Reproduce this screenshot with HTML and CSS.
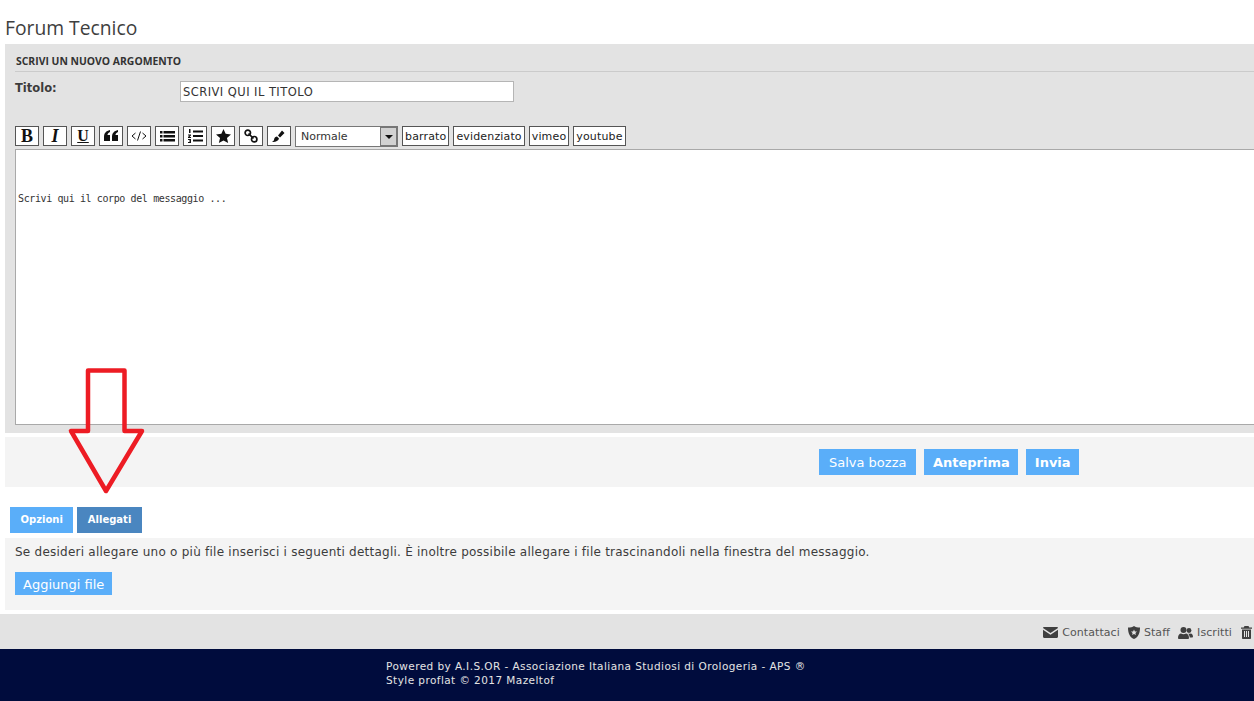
FILE: index.html
```html
<!DOCTYPE html>
<html lang="en">
<head>
    <meta charset="UTF-8">
    <meta name="viewport" content="width=device-width, initial-scale=1.0">
    <title>Forum Tecnico</title>
    <link rel="stylesheet" href="styles.css">
</head>
<body>
    <h1 class="page-title">Forum Tecnico</h1>

    <div class="post-panel">
        <h2 class="post-heading">SCRIVI UN NUOVO ARGOMENTO</h2>
        <div class="title-row">
            <label class="title-label">Titolo:</label>
            <input type="text" class="title-input" value="SCRIVI QUI IL TITOLO">
        </div>
        <div class="toolbar">
            <button class="tool tool-b">B</button>
            <button class="tool tool-i">I</button>
            <button class="tool tool-u">U</button>
            <button class="tool">
                <svg width="14" height="12" viewBox="0 0 14 12"><path d="M0 7C0 3 2 1 6 0v2C4 3 3.500 4 3.500 5H6v6H0zM8 7c0-4 2-6 6-7v2c-2 1-2.500 2-2.500 3H14v6H8z"/></svg>
            </button>
            <button class="tool">
                <svg class="line-icon" width="16" height="12" viewBox="0 0 16 12" stroke-width="1"><path d="M4.500 3 1 6l3.500 3M11.500 3 15 6l-3.500 3M9.500 1.500 6.500 10.500"/></svg>
            </button>
            <button class="tool">
                <svg width="15" height="11" viewBox="0 0 15 11"><path d="M0 0h2.500v2.500H0zM3.500 0H15v2.500H3.500zM0 4h2.500v2.500H0zM3.500 4H15v2.500H3.500zM0 8h2.500v2.500H0zM3.500 8H15v2.500H3.500z"/></svg>
            </button>
            <button class="tool">
                <svg width="15" height="14" viewBox="0 0 15 14"><path d="M5 1.500h10v2H5zM5 6h10v2H5zM5 10.500h10v2H5zM1 0h1.500v4H1zM0 5.500h3v1L1.500 8H3v1H0V8l1.500-1.500H0zM0 10h3v4H0v-1h2v-.5H1v-1h1V11H0z"/></svg>
            </button>
            <button class="tool">
                <svg width="15" height="14" viewBox="0 0 16 15"><path d="M8 0l2.300 5.200 5.700.6-4.300 3.800 1.300 5.400L8 12.200 3 15l1.300-5.400L0 5.800l5.700-.6z"/></svg>
            </button>
            <button class="tool">
                <svg class="line-icon" width="14" height="14" viewBox="0 0 14 14" stroke-width="1.700"><circle cx="3.800" cy="3.800" r="2.700"/><circle cx="10.200" cy="10.200" r="2.700"/><path d="M4.500 4.500l5 5"/></svg>
            </button>
            <button class="tool">
                <svg width="14" height="14" viewBox="0 0 14 14"><path d="M10 1.500 12.500 4 8 8.500 6 6.500zM5 7.500 7 9.500C6.500 12 3 13.500 0 13c1.500-1 2-1.500 2.200-3 .2-1.500 1.500-2.500 2.800-2.500z"/></svg>
            </button>
            <div class="format-select">
                <span class="format-value">Normale</span>
                <span class="format-arrow"></span>
            </div>
            <button class="tool-text">barrato</button>
            <button class="tool-text">evidenziato</button>
            <button class="tool-text">vimeo</button>
            <button class="tool-text">youtube</button>
        </div>
        <div class="editor">Scrivi qui il corpo del messaggio ...</div>
    </div>

    <div class="submit-bar">
        <button class="blue-btn">Salva bozza</button>
        <button class="blue-btn blue-btn-bold">Anteprima</button>
        <button class="blue-btn blue-btn-bold">Invia</button>
    </div>

    <div class="tabs">
        <a class="tab">Opzioni</a>
        <a class="tab tab-active">Allegati</a>
    </div>

    <div class="attach-panel">
        <p class="attach-text">Se desideri allegare uno o più file inserisci i seguenti dettagli. È inoltre possibile allegare i file trascinandoli nella finestra del messaggio.</p>
        <button class="add-file">Aggiungi file</button>
    </div>

    <div class="link-bar">
        <a class="bar-link">
            <svg width="15" height="11" viewBox="0 0 15 11"><path d="M1.200 0h12.600c.7 0 1.200.5 1.200 1L7.500 6 0 1c0-.5.5-1 1.200-1zM0 2.800 7.500 7.800 15 2.800v7c0 .7-.5 1.200-1.200 1.200H1.200C.5 11 0 10.500 0 9.800z"/></svg>
            Contattaci
        </a>
        <a class="bar-link">
            <svg width="12" height="13" viewBox="0 0 12 13"><path fill-rule="evenodd" d="M6 0c1.500 1 3.500 1.500 6 1.500 0 5.500-1.500 9.500-6 11.500C1.500 11 0 7 0 1.500 2.500 1.500 4.500 1 6 0zM6 3.500l.9 1.900 2.100.2-1.600 1.400.5 2L6 8l-1.900 1 .5-2L3 5.600l2.100-.2z"/></svg>
            Staff
        </a>
        <a class="bar-link">
            <svg width="15" height="12" viewBox="0 0 15 12"><circle cx="5.500" cy="3" r="3"/><circle cx="11" cy="3.500" r="2.400"/><path d="M0 11c0-3 1.500-4.500 3-4.500 1.500 1 3.500 1 5 0 1.500 0 3 1.500 3 4.500 0 .5-.5 1-1 1H1c-.5 0-1-.5-1-1zM10 6.500c1 .4 2 .4 2.800 0 1.200 0 2.200 1.500 2.200 3.200 0 .5-.4.8-.8.8h-2.400C11.500 8.800 11 7.500 10 6.500z"/></svg>
            Iscritti
        </a>
        <a class="bar-link">
            <svg width="11" height="13" viewBox="0 0 11 13"><path fill-rule="evenodd" d="M3.500 0h4l.8 1.500H11v1.200H0V1.500h2.700zM1 3.500h9V12c0 .6-.4 1-1 1H2c-.6 0-1-.4-1-1zM3 5v6h1V5zM5 5v6h1V5zM7 5v6h1V5z"/></svg>
        </a>
    </div>

    <div class="site-footer">
        <div>Powered by A.I.S.OR - Associazione Italiana Studiosi di Orologeria - APS ®</div>
        <div>Style proflat © 2017 Mazeltof</div>
    </div>

    <!-- annotation drawn on top of the screenshot -->
    <svg class="red-arrow" width="90" height="134" viewBox="0 0 90 134">
        <path d="M26 3.500H62.500V64H80L44 124 9 64H26Z" fill="none" stroke="#ed1c24" stroke-width="4.500" stroke-linejoin="round"/>
    </svg>
</body>
</html>
```

FILE: styles.css
```css
:root {
    --blue: #5aaef9;
    --blue-dark: #4a86c0;
    --grey-panel: #e3e3e3;
    --grey-light: #f4f4f4;
    --text-color: #3c3c3c;
    --navy: #000c3d;
}

html, body {
    height: 701px;
    overflow: hidden;
}
body {
    margin: 0;
    position: relative;
    background: #ffffff;
    font-family: "DejaVu Sans", Verdana, sans-serif;
    color: var(--text-color);
}
.page-title {
    margin: 0;
    height: 44px;
    padding: 16px 0 0 5px;
    box-sizing: border-box;
    font-family: "Open Sans", sans-serif;
    font-size: 19.300px;
    line-height: 23px;
    font-weight: 400;
    color: #3f3f3f;
}
.post-panel {
    margin-left: 5px;
    height: 389px;
    box-sizing: border-box;
    padding: 11px 0 0 10px;
    background: var(--grey-panel);
}
.post-heading {
    margin: 0;
    height: 16px;
    padding-left: 1px;
    border-bottom: 1px solid #cbcbcb;
    font-family: "Open Sans", sans-serif;
    font-size: 10.400px;
    line-height: 13px;
    font-weight: 700;
    color: #333333;
}
.title-row {
    display: flex;
    align-items: flex-start;
    margin-top: 9px;
}
.title-label {
    width: 165px;
    font-size: 11.500px;
    font-weight: bold;
    line-height: 15px;
}
.title-input {
    width: 334px;
    height: 21px;
    box-sizing: border-box;
    padding: 0 2px;
    border: 1px solid #b5b5b5;
    background: #ffffff;
    font-family: "DejaVu Sans", Verdana, sans-serif;
    font-size: 11.500px;
    letter-spacing: .45px;
    color: #333333;
    outline: none;
}
.toolbar {
    display: flex;
    align-items: center;
    gap: 4px;
    margin-top: 24px;
    height: 20px;
}
.tool, .tool-text {
    height: 20px;
    box-sizing: border-box;
    padding: 0;
    border: 1px solid #555555;
    background: #ffffff;
    color: #111111;
    display: flex;
    align-items: center;
    justify-content: center;
    flex: none;
}
.tool {
    width: 24px;
    font-family: "Liberation Serif", serif;
    font-size: 18px;
}
.tool svg {
    fill: #111111;
}
.tool svg.line-icon {
    fill: none;
    stroke: #111111;
}
.tool-b {
    font-weight: bold;
}
.tool-i {
    font-style: italic;
    font-weight: bold;
}
.tool-u {
    text-decoration: underline;
    font-size: 16px;
    font-weight: bold;
}
.tool-text {
    padding: 0 2px;
    font-family: "DejaVu Sans", Verdana, sans-serif;
    font-size: 11px;
    letter-spacing: .15px;
    color: #222222;
}
.format-select {
    width: 103px;
    height: 21px;
    box-sizing: border-box;
    border: 1px solid #777777;
    background: #ffffff;
    display: flex;
    align-items: center;
    justify-content: space-between;
    flex: none;
    font-size: 11px;
    color: #333333;
}
.format-value {
    padding-left: 5px;
}
.format-arrow {
    width: 17px;
    height: 19px;
    box-sizing: border-box;
    border: 1px solid #777777;
    background: #d2d2d2;
    position: relative;
}
.format-arrow::after {
    content: "";
    position: absolute;
    left: 4px;
    top: 7px;
    border-left: 4px solid transparent;
    border-right: 4px solid transparent;
    border-top: 4px solid #111111;
}
.editor {
    margin-top: 3px;
    height: 276px;
    box-sizing: border-box;
    border: 1px solid #a9a9a9;
    border-right: none;
    padding: 42px 0 0 2px;
    background: #ffffff;
    font-family: "DejaVu Sans Mono", monospace;
    font-size: 10px;
    letter-spacing: -.39px;
    line-height: 14px;
    color: #333333;
}
.submit-bar {
    margin: 4px 0 0 5px;
    height: 50px;
    padding-left: 814px;
    background: var(--grey-light);
    display: flex;
    align-items: center;
    gap: 8px;
}
.blue-btn {
    height: 26px;
    padding: 0 10px;
    border: none;
    background: var(--blue);
    color: #ffffff;
    font-family: "DejaVu Sans", Verdana, sans-serif;
    font-size: 13px;
}
.blue-btn-bold {
    padding: 0 8.500px;
    font-weight: bold;
}
.tabs {
    display: flex;
    gap: 4px;
    margin: 20px 0 0 10px;
}
.tab {
    height: 26px;
    padding: 0 10.500px;
    background: var(--blue);
    color: #ffffff;
    font-size: 10px;
    font-weight: bold;
    line-height: 26px;
}
.tab-active {
    background: var(--blue-dark);
}
.attach-panel {
    margin: 5px 0 0 5px;
    height: 72px;
    box-sizing: border-box;
    padding: 7px 0 0 10px;
    background: var(--grey-light);
}
.attach-text {
    margin: 0;
    font-size: 12px;
    letter-spacing: .24px;
    line-height: 15px;
}
.add-file {
    display: block;
    margin-top: 12px;
    height: 23px;
    padding: 2px 8px 0;
    border: none;
    background: var(--blue);
    color: #ffffff;
    font-family: "DejaVu Sans", Verdana, sans-serif;
    font-size: 13px;
}
.link-bar {
    margin-top: 4px;
    height: 35px;
    box-sizing: border-box;
    padding-top: 2px;
    background: var(--grey-panel);
    display: flex;
    align-items: center;
    justify-content: flex-end;
    gap: 8px;
    font-size: 11px;
    letter-spacing: .08px;
    color: #555555;
}
.bar-link {
    display: flex;
    align-items: center;
    gap: 4px;
}
.bar-link svg {
    fill: #3f3f3f;
}
.bar-link:last-child {
    margin: 0 2px 0 1px;
}
.site-footer {
    height: 52px;
    box-sizing: border-box;
    padding: 10px 0 0 386px;
    background: var(--navy);
    color: #e4e4e4;
    font-size: 10.500px;
    letter-spacing: .43px;
    line-height: 14px;
}
.red-arrow {
    position: absolute;
    left: 62px;
    top: 367px;
    overflow: visible;
}
```
